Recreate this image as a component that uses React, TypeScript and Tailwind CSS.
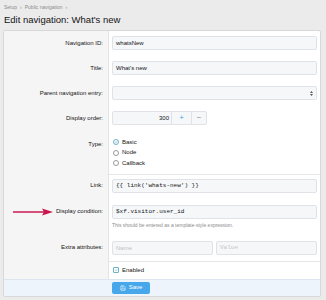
import type { ReactNode } from "react"
import { Save } from "lucide-react"

const inputCls =
  "h-[14px] rounded-[2px] border border-[#dfe3e8] bg-[#f5f7f9] px-[3px] text-[6px] leading-[12px] text-[#141414]"

function Row({
  label,
  children,
  extra,
  className = "pt-[5px] pb-[6px]",
}: {
  label?: ReactNode
  children: ReactNode
  extra?: ReactNode
  className?: string
}) {
  return (
    <div className="flex">
      <div className={"flex w-[105px] shrink-0 items-start justify-between border-r border-[#e4e4e4] bg-[#f5f5f5] pr-[5px] " + className}>
        <span className="flex h-[14px] items-center">{extra}</span>
        <span className="flex h-[14px] items-center text-[6px] text-[#141414]">{label}</span>
      </div>
      <div className={"min-w-0 flex-1 pl-[3px] pr-[3px] " + className}>{children}</div>
    </div>
  )
}

function Radio({ label, checked }: { label: string; checked?: boolean }) {
  return (
    <div className="flex h-[10.5px] items-center gap-[3px] text-[6px] text-[#141414]">
      <span
        className={
          "flex h-[6px] w-[6px] items-center justify-center rounded-full border " +
          (checked ? "border-[#6cb2c9]" : "border-[#9a9a9a]")
        }
      >
        {checked && (
          <svg viewBox="0 0 8 8" className="h-[4px] w-[4px]">
            <path d="M1.5 4.2 3.2 5.8 6.6 2.2" fill="none" stroke="#5aa8c2" strokeWidth="1.2" />
          </svg>
        )}
      </span>
      {label}
    </div>
  )
}

function Separator() {
  return (
    <div className="flex">
      <div className="w-[105px] shrink-0 border-r border-[#e4e4e4] bg-[#f5f5f5]" />
      <div className="h-0 flex-1 border-t border-[#e6e6e6]" />
    </div>
  )
}

export default function App() {
  return (
    <div
      className="h-[300px] w-[326px] overflow-hidden bg-[#ebebeb] pl-[3px] pr-[5px]"
      style={{ fontFamily: '"Liberation Sans", Arial, sans-serif' }}
    >
      <div className="flex h-[14px] items-center gap-[3px] pl-[1px] pt-[1px] text-[5px] text-[#8c8c8c]">
        <span>Setup</span>
        <span>›</span>
        <span>Public navigation</span>
        <span>›</span>
      </div>
      <h1 className="h-[16px] pl-[1px] text-[9.5px] leading-[11px] text-[#141414]">
        Edit navigation: What's new
      </h1>

      <div className="overflow-hidden rounded-[2px] border border-[#d8d8d8] bg-white">
        <Row label="Navigation ID:">
          <div className={inputCls}>whatsNew</div>
        </Row>
        <Row label="Title:">
          <div className={inputCls}>What's new</div>
        </Row>
        <Row label="Parent navigation entry:">
          <div className={inputCls + " flex items-center justify-end pr-[3px]"}>
            <svg viewBox="0 0 6 10" className="h-[5px] w-[3px]">
              <path d="M0 4 3 0 6 4Z M0 6 3 10 6 6Z" fill="#555" />
            </svg>
          </div>
        </Row>
        <Row label="Display order:">
          <div className="flex h-[14px] w-[95px] overflow-hidden rounded-[2px] border border-[#dfe3e8] bg-[#f5f7f9] text-[6px] text-[#141414]">
            <div className="flex w-[58px] items-center justify-end pr-[2px]">300</div>
            <div className="flex w-[20px] items-center justify-center border-l border-[#dfe3e8] text-[8px] text-[#47a7eb]">
              +
            </div>
            <div className="flex flex-1 items-center justify-center border-l border-[#dfe3e8] text-[8px] text-[#8c8c8c]">
              −
            </div>
          </div>
        </Row>
        <Row label="Type:" className="pt-[6px] pb-[5px]">
          <div className="pl-[1px]">
            <Radio label="Basic" checked />
            <Radio label="Node" />
            <Radio label="Callback" />
          </div>
        </Row>
        <Separator />
        <Row label="Link:" className="pt-[4px] pb-[6px]">
          <div className={inputCls + " font-['Liberation_Mono',monospace]"}>{"{{ link('whats-new') }}"}</div>
        </Row>
        <Row
          label="Display condition:"
          className="pt-[6px] pb-[6px]"
          extra={
            <svg viewBox="0 0 40 8" className="ml-[9px] h-[8px] w-[40px]">
              <path d="M0 4H32" stroke="#c8174f" strokeWidth="1.4" />
              <path d="M29 0.5 40 4 29 7.5 31 4Z" fill="#c8174f" />
            </svg>
          }
        >
          <div className={inputCls + " font-['Liberation_Mono',monospace]"}>$xf.visitor.user_id</div>
          <div className="mt-[3px] text-[5px] leading-[7px] text-[#8c8c8c]">
            This should be entered as a template-style expression.
          </div>
        </Row>
        <Row label="Extra attributes:" className="pt-[6px] pb-[6px]">
          <div className="flex gap-[3px]">
            <div className={inputCls + " flex-1 text-[#c4c4c4]"}>Name</div>
            <div className={inputCls + " flex-1 font-['Liberation_Mono',monospace] text-[#c4c4c4]"}>Value</div>
          </div>
        </Row>
        <Separator />
        <div className="flex">
          <div className="w-[105px] shrink-0 border-r border-[#e4e4e4] bg-[#f5f5f5]" />
          <div className="flex h-[17px] flex-1 items-center gap-[3px] pl-[4px] text-[6px] text-[#141414]">
            <span className="flex h-[6px] w-[6px] items-center justify-center rounded-[1px] border border-[#6cb2c9]">
              <svg viewBox="0 0 8 8" className="h-[4px] w-[4px]">
                <path d="M1.5 4.2 3.2 5.8 6.6 2.2" fill="none" stroke="#5aa8c2" strokeWidth="1.2" />
              </svg>
            </span>
            Enabled
          </div>
        </div>
        <div className="flex h-[17px] items-center border-t border-[#dbe6f1] bg-[#edf4fb] pl-[108px]">
          <button className="flex h-[12px] w-[38px] items-center justify-center gap-[3px] rounded-[2px] bg-[#47a7eb] text-[6px] text-white">
            <Save className="h-[6px] w-[6px]" strokeWidth={2} />
            Save
          </button>
        </div>
      </div>
    </div>
  )
}
